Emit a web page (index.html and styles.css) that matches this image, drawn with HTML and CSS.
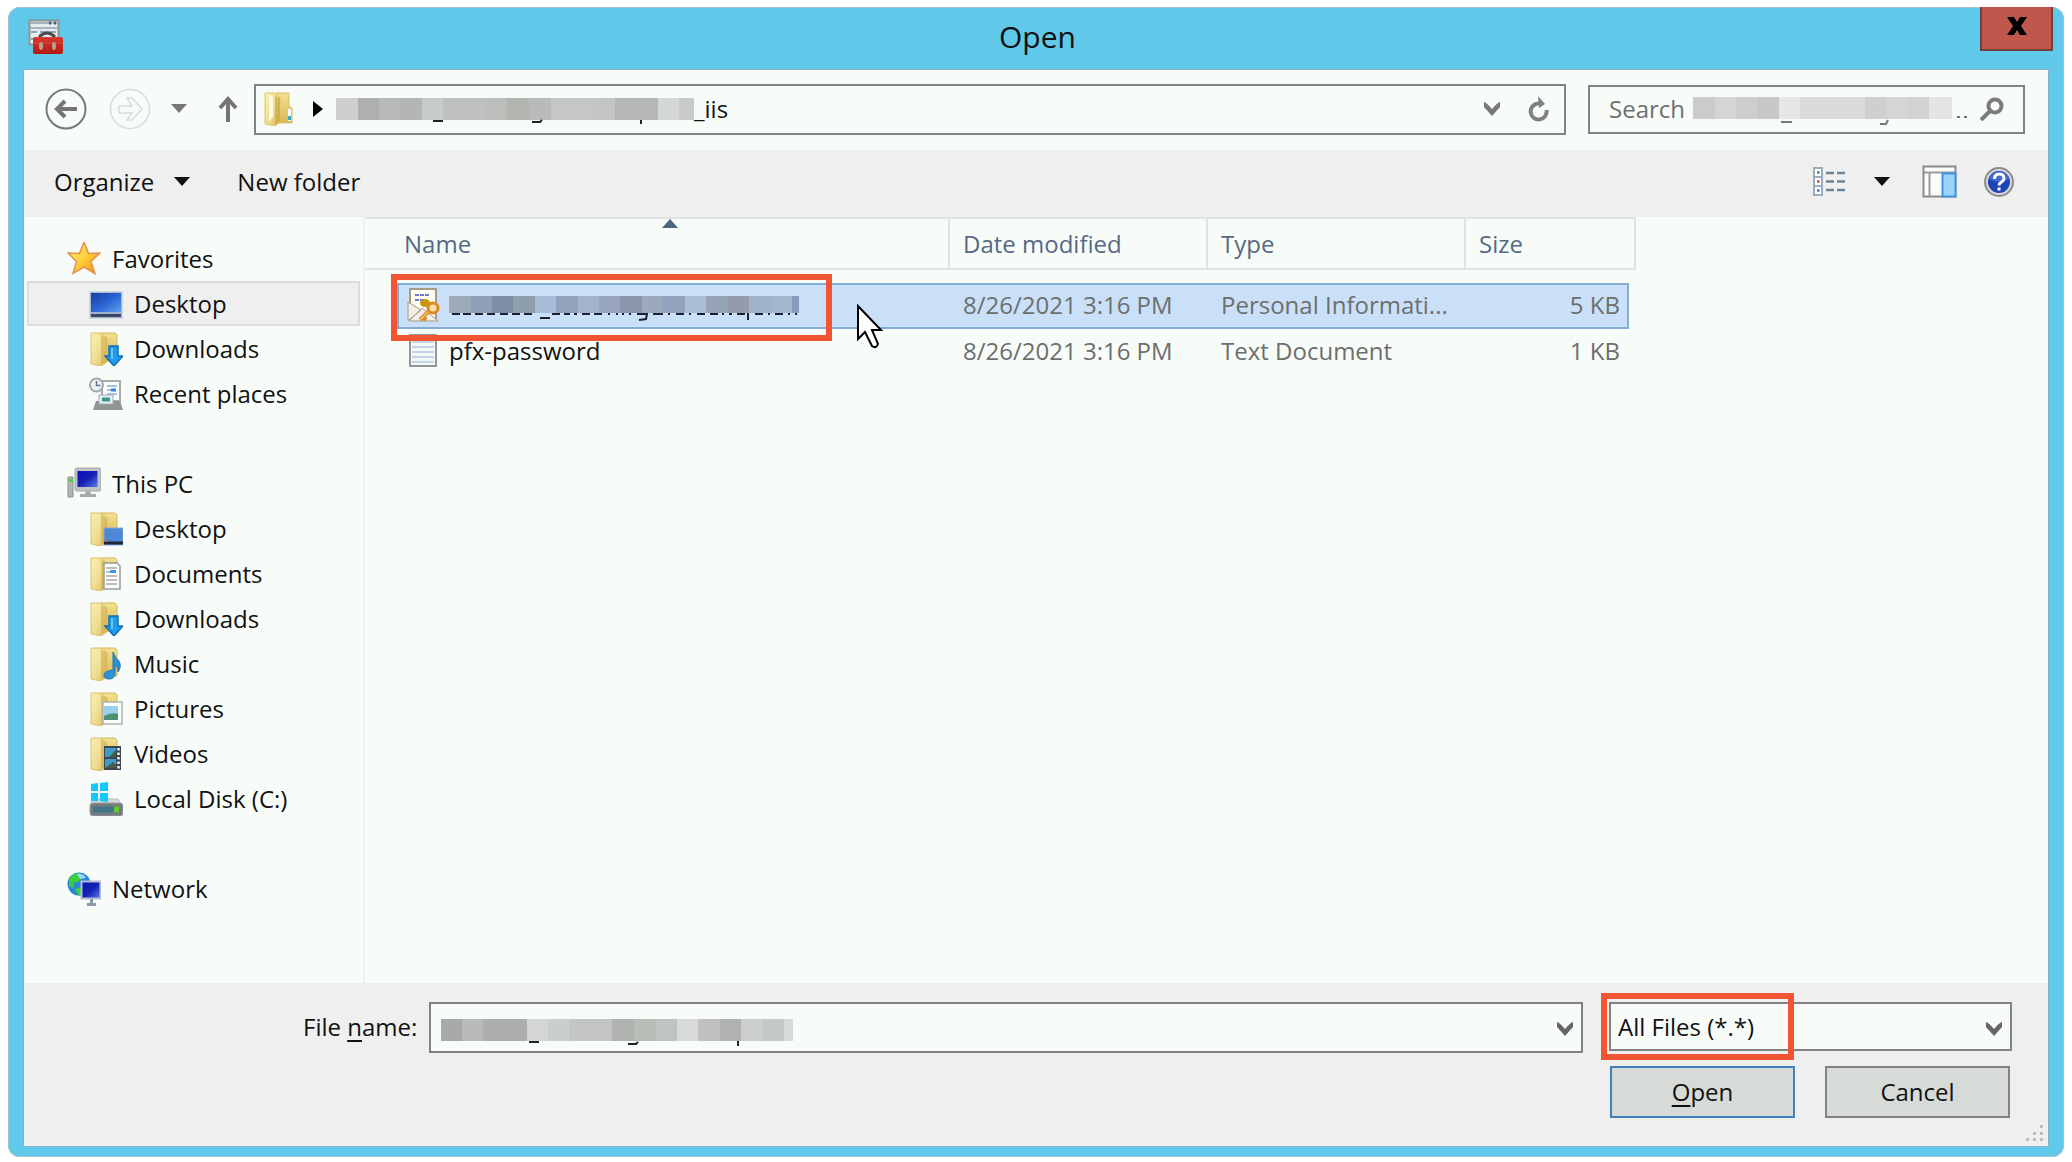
FILE: index.html
```html
<!DOCTYPE html>
<html lang="en">
<head>
<meta charset="utf-8">
<title>Open</title>
<link rel="stylesheet" href="styles.css">
</head>
<body>
<svg class="sprites" aria-hidden="true">
  <defs>
    <linearGradient id="g-flap" x1="0" y1="0" x2="1" y2="1"><stop offset="0" stop-color="#faf0b4"/><stop offset=".55" stop-color="#efdc90"/><stop offset="1" stop-color="#dcb95a"/></linearGradient>
    <linearGradient id="g-back" x1="0" y1="0" x2="0" y2="1"><stop offset="0" stop-color="#f2e091"/><stop offset="1" stop-color="#d9b755"/></linearGradient>
    <linearGradient id="g-screen" x1="0" y1="0" x2="1" y2="1"><stop offset="0" stop-color="#1a3f9c"/><stop offset=".5" stop-color="#2a63d2"/><stop offset="1" stop-color="#5f9ff0"/></linearGradient>
    <linearGradient id="g-navy" x1="0" y1="0" x2="1" y2="1"><stop offset="0" stop-color="#0a12b8"/><stop offset=".5" stop-color="#1420b4"/><stop offset="1" stop-color="#5a7be8"/></linearGradient>
    <linearGradient id="g-star" x1="0" y1="0" x2="1" y2="1"><stop offset="0" stop-color="#fff27a"/><stop offset=".5" stop-color="#fdd03a"/><stop offset="1" stop-color="#f08a1c"/></linearGradient>
    <linearGradient id="g-red" x1="0" y1="0" x2="0" y2="1"><stop offset="0" stop-color="#d83a32"/><stop offset="1" stop-color="#b3170f"/></linearGradient>
    <symbol id="folder" viewBox="0 0 34 34">
      <path d="M11 1h15l2 2v26H12z" fill="url(#g-back)" stroke="#d6b65c"/>
      <path d="M2 1h9l7 5v24l-6 4-10-2z" fill="url(#g-flap)" stroke="#dcc070"/>
      <path d="M12 3v30l6-4V6z" fill="#cda944" opacity=".55"/>
    </symbol>
    <symbol id="arrow-down" viewBox="0 0 34 34">
      <path d="M20 14h9v10h5l-9 10-9-10h4z" fill="#1e9bec" stroke="#1670b0" stroke-width="1.5"/>
      <path d="M23 16v11" stroke="#6cc5fa" stroke-width="2"/>
    </symbol>
    <symbol id="triangle" viewBox="0 0 16 10"><path d="M0 0h16L8 9z" fill="currentColor"/></symbol>
    <symbol id="chevron" viewBox="0 0 16 14"><path d="M0 0q3 1 8 7 5-6 8-7v5L8 14 0 5z" fill="currentColor"/></symbol>
  </defs>
</svg>

<main class="dialog">
  <header class="titlebar">
    <svg class="app-icon" viewBox="0 0 36 36" aria-hidden="true">
      <rect x="1.500" y="1.500" width="29" height="24" fill="#e6ebee" stroke="#8b9499" stroke-width="2"/>
      <path d="M2 4h28M2 9h28" stroke="#a9b4bd" stroke-width="2"/><path d="M21 4h2M26 4h2" stroke="#46607c" stroke-width="3"/>
      <path d="M3 13h6M3 20h4M12 13h16" stroke="#8fa3ba" stroke-width="2"/>
      <path d="M12 19v-2q7-6 14 0v2" fill="none" stroke="#4a4a4a" stroke-width="3"/>
      <rect x="5" y="18" width="30" height="17" rx="2" fill="url(#g-red)"/>
      <path d="M5 24h30" stroke="#d84b42"/><ellipse cx="13" cy="27" rx="2" ry="4" fill="#b9a092"/><ellipse cx="26" cy="27" rx="2" ry="4" fill="#b9a092"/>
    </svg>
    <h1 class="title">Open</h1>
    <button class="close" type="button" aria-label="Close"><svg width="20" height="18" viewBox="0 0 20 18"><path d="M0 0h7l3 5 3-5h7l-6 9 6 9h-7l-3-5-3 5H0l6-9z" fill="#000"/></svg></button>
  </header>

  <div class="client">
    <nav class="navbar" aria-label="Location">
      <button class="plain back" type="button" aria-label="Back"><svg width="42" height="42" viewBox="0 0 42 42" fill="none"><circle cx="21" cy="21" r="19.500" stroke="#77797a" stroke-width="2"/><path d="M12 21h20M20 13l-8 8 8 8" stroke="#757575" stroke-width="4"/></svg></button>
      <button class="plain forward" type="button" aria-label="Forward"><svg width="42" height="42" viewBox="0 0 42 42" fill="none" stroke="#d9dbd9" stroke-width="1.500"><circle cx="21" cy="21" r="19.500"/><path d="M10 18h13l-5-8h5l10 11-10 11h-5l5-7H10z"/></svg></button>
      <button class="plain recent" type="button" aria-label="Recent locations"><svg width="16" height="10"><use href="#triangle"/></svg></button>
      <button class="plain up" type="button" aria-label="Up"><svg width="20" height="26" viewBox="0 0 20 26"><path d="M10 26V4M2 12l8-9 8 9" fill="none" stroke="#757575" stroke-width="4"/></svg></button>
      <div class="address">
        <svg class="address-folder" viewBox="0 0 30 34" aria-hidden="true">
          <path d="M12 1h13v13l3 2v15H12z" fill="url(#g-back)" stroke="#dcc062"/><path d="M1 1h9l6 4v25l-5 4-10-2z" fill="url(#g-flap)" stroke="#dfc468"/><path d="M5 3l4 2v20l-4 4z" fill="#fffbe0"/><path d="M11 4v29l5-4V6z" fill="#c7a03c" opacity=".6"/><path d="M25.500 17v12" stroke="#fff" stroke-width="3"/><path d="M25.500 24v4" stroke="#3fa6c4" stroke-width="3"/>
        </svg>
        <svg class="crumb-arrow" width="10" height="16" viewBox="0 0 10 16" aria-hidden="true"><path d="M0 0l10 8-10 8z" fill="#000"/></svg>
        <svg class="mosaic" width="358" height="26" viewBox="0 0 358 26" aria-hidden="true">
          <path fill="#cfd0cd" d="M0 0h22v22H0z"/><path fill="#aeb0ad" d="M22 0h21v22H22z"/><path fill="#b8bab7" d="M43 0h21v22H43z"/><path fill="#b4b6b3" d="M64 0h22v22H64z"/><path fill="#c8ccc8" d="M86 0h21v22H86z"/><path fill="#bfc1be" d="M107 0h43v22h-43z"/><path fill="#bcbebb" d="M150 0h21v22h-21z"/><path fill="#b3b5b1" d="M171 0h22v22h-22z"/><path fill="#b9bbb8" d="M193 0h22v22h-22z"/><path fill="#c5c7c4" d="M215 0h43v22h-43z"/><path fill="#c3c5c2" d="M258 0h21v22h-21z"/><path fill="#b5b7b4" d="M279 0h43v22h-43z"/><path fill="#d4d8d4" d="M322 0h21v22h-21z"/><path fill="#cacbc9" d="M343 0h15v22h-15z"/>
          <path d="M97 23h10M196 24h8l2-2M305 22v4" fill="none" stroke="#222" stroke-width="2"/>
        </svg>
        <span class="crumb">_iis</span>
        <button class="plain address-drop" type="button" aria-label="Previous locations"><svg width="16" height="14"><use href="#chevron"/></svg></button>
        <button class="plain" type="button" aria-label="Refresh"><svg width="22" height="26" viewBox="0 0 22 26"><path d="M13 7.500h-2a8 8 0 1 0 8.500 6.500" fill="none" stroke="#808080" stroke-width="4"/><path d="M11 0l7 8-6 4z" fill="#808080"/></svg></button>
      </div>
      <div class="search">
        <input class="search-input" type="search" placeholder="Search" aria-label="Search">
        <svg class="mosaic" width="274" height="28" viewBox="0 0 274 28" aria-hidden="true">
          <path fill="#c9ccc9" d="M0 0h22v22H0z"/><path fill="#d3d6d3" d="M22 0h21v22H22z"/><path fill="#cecfcd" d="M43 0h21v22H43z"/><path fill="#c8c9c6" d="M64 0h22v22H64z"/><path fill="#e5e8e5" d="M86 0h21v22H86z"/><path fill="#d8dbd8" d="M107 0h65v22h-65z"/><path fill="#cdd0cc" d="M172 0h22v22h-22z"/><path fill="#d6d6d4" d="M194 0h21v22h-21z"/><path fill="#d2d2d0" d="M215 0h21v22h-21z"/><path fill="#e2e5e2" d="M236 0h23v22h-23z"/>
          <path d="M88 25h11M187 27h6l2-4M264 20h3M271 20h3" fill="none" stroke="#777" stroke-width="2"/>
        </svg>
        <button class="plain find" type="submit" aria-label="Find"><svg width="24" height="24" viewBox="0 0 24 24" fill="none" stroke="#7b7b7b"><circle cx="15" cy="9" r="6.500" stroke-width="4"/><path d="M10 14l-9 9" stroke-width="4"/></svg></button>
      </div>
    </nav>

    <div class="toolbar">
      <button class="plain organize" type="button">Organize <svg width="16" height="10" aria-hidden="true"><use href="#triangle"/></svg></button>
      <button class="plain" type="button">New folder</button>
      <button class="plain view" type="button" aria-label="Change view"><svg width="34" height="30" viewBox="0 0 34 30" fill="none"><path d="M1 1h8v27H1zM1 10h8M1 19h8" fill="#fff" stroke="#9aacbd" stroke-width="2"/><path d="M4 5.500h2.500" stroke="#3f8a50" stroke-width="2.500"/><path d="M4 14.500h2.500" stroke="#e0402a" stroke-width="2.500"/><path d="M4 23.500h2.500" stroke="#2a7bd0" stroke-width="2.500"/><path d="M13 6h8m3 0h8M13 14.500h8m3 0h8M13 23h8m3 0h8" stroke="#6f8396" stroke-width="2.500"/></svg></button>
      <button class="plain view-drop" type="button" aria-label="More views"><svg width="16" height="10"><use href="#triangle"/></svg></button>
      <button class="plain pane" type="button" aria-label="Preview pane"><svg width="35" height="33" viewBox="0 0 35 33"><path d="M1.500 1.500h32v30h-32z" fill="#fafdfb" stroke="#8a8a8a" stroke-width="2"/><path d="M2 7.500h31M7.500 8v23" stroke="#9a9a9a" stroke-width="2"/><path d="M20.500 8.500h13v23h-13z" fill="#9ed3fb" stroke="#3d93e6" stroke-width="2"/></svg></button>
      <button class="plain" type="button" aria-label="Help"><svg width="30" height="30" viewBox="0 0 30 30"><circle cx="15" cy="15" r="14" fill="#d8d8d4" stroke="#8d8d8d" stroke-width="2"/><circle cx="15" cy="15" r="11" fill="#1d44b8"/><path d="M5 12a10.500 10.500 0 0 1 20 0q-9 6-20 0" fill="#5479dc" opacity=".7"/><path d="M10.500 12q0-5 4.800-5t4.700 4.500q0 2-2.500 3.500T15 18.500" fill="none" stroke="#fff" stroke-width="3"/><path d="M13.500 20.500h3v3h-3z" fill="#fff"/></svg></button>
    </div>

    <div class="browser">
      <nav class="sidebar" aria-label="Places">
        <ul class="group">
          <li><a class="place" href="#favorites"><svg class="icon" viewBox="0 0 34 34"><path d="M17 0l4.500 11.500L33 11l-9 8.500 4 12L17 25 6 31.500l3.500-12L1 11l11.500.500z" fill="url(#g-star)" stroke="#e5904a" stroke-width="1.500"/></svg>Favorites</a></li>
          <li><a class="place child current" href="#desktop"><svg class="icon" viewBox="0 0 34 34"><rect x="1" y="5" width="32" height="26" fill="#9fb4cc" stroke="#b2c2d4"/><rect x="2" y="6" width="30" height="19" fill="url(#g-screen)"/><path d="M2 27h30v3H2z" fill="#3a4868"/></svg>Desktop</a></li>
          <li><a class="place child" href="#downloads"><svg class="icon" viewBox="0 0 34 34"><use href="#folder"/><use href="#arrow-down"/></svg>Downloads</a></li>
          <li><a class="place child" href="#recent"><svg class="icon" viewBox="0 0 34 34"><path d="M13 4h18v20H13z" fill="#fbfcfc" stroke="#a9adad" stroke-width="2"/><path d="M18 9h10M18 13h4M18 17h10" stroke="#a8c0dc" stroke-width="2"/><path d="M22 13h5" stroke="#2f86e8" stroke-width="3"/><path d="M7 24h24l3 9H4z" fill="#8f9494"/><rect x="10" y="18" width="14" height="9" fill="#e5eff5" stroke="#a0abb2"/><path d="M13 22.500h8" stroke="#3a9a8a" stroke-width="4"/><circle cx="7.500" cy="8" r="6.500" fill="#edf1f3" stroke="#a2a8aa" stroke-width="2"/><path d="M7.500 4v4.500h4" fill="none" stroke="#607890" stroke-width="1.500"/></svg>Recent places</a></li>
        </ul>
        <ul class="group">
          <li><a class="place" href="#pc"><svg class="icon" viewBox="0 0 34 34"><path d="M1 10h5v20H1z" fill="#b4b6b6" stroke="#8c9090"/><path d="M2 13.500h4" stroke="#45d62c" stroke-width="3"/><rect x="8" y="1" width="26" height="23" rx="2" fill="#c0c2c4" stroke="#a6a8aa"/><rect x="10.500" y="4" width="20" height="16" fill="url(#g-navy)"/><path d="M19 24h4l1 3h5v3H13v-3h5z" fill="#a6a9ab"/></svg>This PC</a></li>
          <li><a class="place child" href="#pc-desktop"><svg class="icon" viewBox="0 0 34 34"><use href="#folder"/><rect x="15" y="16" width="19" height="17" fill="#4b88d8" stroke="#8ca8cc"/><path d="M15 31h19" stroke="#1d2638" stroke-width="3"/><path d="M16 29h3" stroke="#e8502a" stroke-width="2"/></svg>Desktop</a></li>
          <li><a class="place child" href="#documents"><svg class="icon" viewBox="0 0 34 34"><use href="#folder"/><path d="M15 6h13l3 3v23H15z" fill="#fcfdfd" stroke="#9b9b98" stroke-width="1.500"/><path d="M17 11h11M17 15h4M17 19h11M17 23h11M17 27h11" stroke="#a6a6a2" stroke-width="1.500"/><path d="M21 14.500h6" stroke="#3c98ee" stroke-width="3"/></svg>Documents</a></li>
          <li><a class="place child" href="#pc-downloads"><svg class="icon" viewBox="0 0 34 34"><use href="#folder"/><use href="#arrow-down"/></svg>Downloads</a></li>
          <li><a class="place child" href="#music"><svg class="icon" viewBox="0 0 34 34"><use href="#folder"/><path d="M24 5q2 6 6 9 3 6-1 11 0-6-3-7v8q0 6-6 6-5 0-5-4t9-5z" fill="#2e92d6" stroke="#1f78b8"/></svg>Music</a></li>
          <li><a class="place child" href="#pictures"><svg class="icon" viewBox="0 0 34 34"><use href="#folder"/><rect x="14" y="10" width="19" height="22" fill="#fbfcfc" stroke="#b0b2b2" stroke-width="1.500"/><path d="M15 14h14v14H15z" fill="#9cd0ea"/><path d="M15 24q8-4 14-2v6H15z" fill="#4c8f74"/></svg>Pictures</a></li>
          <li><a class="place child" href="#videos"><svg class="icon" viewBox="0 0 34 34"><use href="#folder"/><path d="M15 9h17v24H15z" fill="#3c4650"/><path d="M16 11h11v9H16zM16 22h11v9H16z" fill="#3d9cc8"/><path d="M20 20l7-7v7zM16 31l8-6 3 3v3z" fill="#4d5a48"/><path d="M29.500 11v21" stroke="#eef2f2" stroke-width="2.500" stroke-dasharray="2.500 2"/></svg>Videos</a></li>
          <li><a class="place child" href="#disk-c"><svg class="icon" viewBox="0 0 34 34"><path d="M4 17h25l4 6H1z" fill="#d6d9da" stroke="#b6babb"/><rect x="1" y="21" width="33" height="13" rx="3" fill="#747c80" stroke="#9ca2a5"/><path d="M4 24.500h26v6H4z" fill="#437488"/><path d="M25 24.500h5v6h-5z" fill="#62c82e"/><path d="M2 2l7-1v8H2zM11 1l8-1v9h-8zM2 11h7v8H2zM11 11h8v9l-8-1z" fill="#12c8f8"/></svg>Local Disk (C:)</a></li>
        </ul>
        <ul class="group">
          <li><a class="place" href="#network"><svg class="icon" viewBox="0 0 34 34"><circle cx="12" cy="12" r="11.500" fill="#2a86d8"/><path d="M2 7q4-6 10-6l4 4-5 5-4 1-1 5-4-2zM8 17l6-2 3 5-5 4z" fill="#3ad03c"/><path d="M10 2q6-1 9 4l-6 1z" fill="#9bd6f4"/><rect x="14.500" y="9.500" width="19" height="17" fill="url(#g-navy)" stroke="#b4bcd6" stroke-width="2"/><path d="M23 27h3v4h3v3h-9v-3h3z" fill="#8f98a8"/></svg>Network</a></li>
        </ul>
      </nav>

      <section class="listing" aria-label="Files">
        <table class="files">
          <colgroup><col class="c-lead"><col class="c-name"><col class="c-date"><col class="c-type"><col class="c-size"><col class="c-tail"></colgroup>
          <thead>
            <tr><th class="h-name" colspan="2" aria-sort="ascending">Name<svg class="sort" width="16" height="9" viewBox="0 0 16 9" aria-hidden="true"><path d="M0 9l8-9 8 9z" fill="#4d6580"/></svg></th><th>Date modified</th><th>Type</th><th colspan="2">Size</th></tr>
          </thead>
          <tbody>
            <tr class="selected">
              <td class="blank"></td>
              <td class="name">
                <div class="file">
                  <svg class="icon" viewBox="0 0 34 34" aria-hidden="true"><path d="M3 1h26v31H3z" fill="#fdfcf5" stroke="#a99b80" stroke-width="2"/><path d="M8 7h14M8 12h10" stroke="#6c7ccc" stroke-width="2" stroke-dasharray="4 1"/><path d="M1 14l13 8-12 10H1zM2 33l13-13 16 13z" fill="#f1efe8" stroke="#a49a88"/><ellipse cx="18" cy="15" rx="5" ry="4" fill="#c9950a"/><circle cx="26" cy="20" r="5" fill="#fde0a8" stroke="#d98a26" stroke-width="3"/><path d="M22 23l-9 9M16 29l3 3" stroke="#d98a26" stroke-width="4"/><path d="M21 24l-8 8" stroke="#fbc56c" stroke-width="1.500"/></svg>
                  <svg class="mosaic" width="350" height="26" viewBox="0 0 350 26" role="img" aria-label="Certificate file">
                    <path d="M3 18h8M14 18h8M26 18h8M38 18h8M51 18h8M63 18h8M75 18h8M103 18h8M115 18h6M125 18h3M133 18h8M145 18h8M159 18h2M167 18h2M173 18h2M180 18h2M188 18h10l-1 5-7 1M204 18h10M219 18h2M227 18h8M240 18h2M248 18h8M261 18h8M273 18h2M280 18h3M288 18h8M299 17v7M306 18h8M319 18h2M326 18h8M339 18h2M346 18h2M91 22h10" fill="none" stroke="#1b2130" stroke-width="2"/>
                    <path fill="#9daab8" d="M0 0h22v17H0z"/><path fill="#909fb8" d="M22 0h21v17H22z"/><path fill="#7d8ea8" d="M43 0h21v17H43z"/><path fill="#8f9ead" d="M64 0h22v17H64z"/><path fill="#a9bcd8" d="M86 0h21v17H86z"/><path fill="#93a2bb" d="M107 0h22v17h-22z"/><path fill="#a2b3cb" d="M129 0h21v17h-21z"/><path fill="#97a5c0" d="M150 0h21v17h-21z"/><path fill="#8b96ac" d="M171 0h22v17h-22z"/><path fill="#9ca8bc" d="M193 0h21v17h-21z"/><path fill="#93a3bd" d="M214 0h22v17h-22z"/><path fill="#a9bfd8" d="M236 0h21v17h-21z"/><path fill="#95a3b5" d="M257 0h22v17h-22z"/><path fill="#939bac" d="M279 0h21v17h-21z"/><path fill="#9fb2cc" d="M300 0h22v17h-22z"/><path fill="#a3b6d0" d="M322 0h21v17h-21z"/><path fill="#8a9cbc" d="M343 0h7v17h-7z"/>
                  </svg>
                  <span class="callout callout-file"></span>
                  <svg class="cursor" width="28" height="48" viewBox="0 0 28 48" aria-hidden="true"><path d="M2 3v33l7-7 7 14q4 3 6-2l-6-14h9z" fill="#fff" stroke="#000" stroke-width="2"/></svg>
                </div>
              </td>
              <td>8/26/2021 3:16 PM</td><td>Personal Informati...</td><td class="size">5 KB</td><td class="blank"></td>
            </tr>
            <tr>
              <td class="blank"></td>
              <td class="name"><div class="file"><svg class="icon" viewBox="0 0 34 34" aria-hidden="true"><path d="M3 1h26v31H3z" fill="#f4f7f8" stroke="#929696" stroke-width="2"/><path d="M5 8h22M5 13h22M5 18h22M5 23h22M5 28h22" stroke="#b4cbe0" stroke-width="1.500"/></svg>pfx-password</div></td>
              <td>8/26/2021 3:16 PM</td><td>Text Document</td><td class="size">1 KB</td><td class="blank"></td>
            </tr>
          </tbody>
        </table>
      </section>
    </div>

    <form class="footer">
      <div class="fields">
        <label for="filename">File <u>n</u>ame:</label>
        <div class="combo combo-name">
          <input id="filename" class="field" type="text">
          <svg class="mosaic" width="352" height="27" viewBox="0 0 352 27" aria-hidden="true">
            <path fill="#a8aaa7" d="M0 0h21v22H0z"/><path fill="#b9bbb8" d="M21 0h21v22H21z"/><path fill="#adafac" d="M42 0h44v22H42z"/><path fill="#d3d6d2" d="M86 0h21v22H86z"/><path fill="#cbcfcb" d="M107 0h21v22h-21z"/><path fill="#c4c6c3" d="M128 0h43v22h-43z"/><path fill="#b1b3b0" d="M171 0h22v22h-22z"/><path fill="#b9beb9" d="M193 0h22v22h-22z"/><path fill="#c0c4c0" d="M215 0h21v22h-21z"/><path fill="#d8dad7" d="M236 0h21v22h-21z"/><path fill="#c0c1be" d="M257 0h22v22h-22z"/><path fill="#b0b2af" d="M279 0h21v22h-21z"/><path fill="#cdcfcc" d="M300 0h22v22h-22z"/><path fill="#c4c8c4" d="M322 0h21v22h-21z"/><path fill="#d8dad7" d="M343 0h9v22h-9z"/>
            <path d="M88 23h10M187 25h8l2-2M297 22v5" fill="none" stroke="#222" stroke-width="2"/>
          </svg>
          <svg class="drop" width="16" height="14" aria-hidden="true"><use href="#chevron"/></svg>
        </div>
        <div class="combo combo-type">
          <select class="field" aria-label="File type"><option>All Files (*.*)</option></select>
          <svg class="drop" width="16" height="14" aria-hidden="true"><use href="#chevron"/></svg>
          <span class="callout callout-type"></span>
        </div>
      </div>
      <div class="actions">
        <button class="action primary" type="submit"><u>O</u>pen</button>
        <button class="action" type="button">Cancel</button>
      </div>
      <svg class="grip" width="18" height="18" viewBox="0 0 18 18" aria-hidden="true"><path d="M14 1h3v3h-3zM7 8h3v3H7zM14 8h3v3h-3zM0 14h3v3H0zM7 14h3v3H7zM14 14h3v3h-3z" fill="#bdbdbd"/></svg>
    </form>
  </div>
</main>
</body>
</html>
```
FILE: styles.css
```css
* { box-sizing: border-box; }

body {
  margin: 0;
  padding: 7px 8px 5px;
  min-height: 100vh;
  display: flex;
  background: #fff;
  color: #111;
  font: 24px/32px "Open Sans", "Noto Sans", sans-serif;
}

button, input, select { font: inherit; color: inherit; }
svg { display: block; flex: none; }
.sprites { position: absolute; width: 0; height: 0; }

.dialog {
  flex: 1;
  display: flex;
  flex-direction: column;
  min-width: 0;
  padding: 0 16px 11px;
  background: #60c8e9;
  border-radius: 12px;
  box-shadow: inset 0 0 0 1px #9cc3d2;
}

.titlebar {
  display: flex;
  align-items: flex-start;
  justify-content: space-between;
  height: 63px;
}
.app-icon { width: 36px; height: 36px; margin: 12px 31px 0 4px; }
.title { margin: 10px 0 0; font-size: 30px; line-height: 40px; font-weight: 400; }
.close {
  display: grid;
  place-items: center;
  width: 73px;
  height: 44px;
  margin-right: -5px;
  padding: 0 0 4px;
  background: #bf574d;
  border: 2px solid #74423d;
  border-top: 0;
}

.client {
  flex: 1;
  display: flex;
  flex-direction: column;
  background: #f7fcf8;
  box-shadow: 0 0 0 1px #7fb2c8;
}

.plain {
  display: flex;
  align-items: center;
  padding: 0;
  border: 0;
  background: none;
}

.navbar {
  display: flex;
  align-items: center;
  height: 80px;
  padding: 0 23px 2px 21px;
  color: #777;
}
.forward { margin-left: 22px; }
.recent { margin-left: 20px; }
.up { margin: 0 16px 0 31px; }
.address {
  flex: 1;
  display: flex;
  align-items: center;
  height: 51px;
  padding: 0 15px 0 8px;
  border: 2px solid #828282;
}
.address-folder { width: 30px; height: 34px; margin-right: 19px; }
.crumb-arrow { margin-right: 13px; }
.address .mosaic { margin-top: 4px; }
.crumb { color: #111; }
.address-drop { margin: 0 27px 0 auto; }
.search {
  position: relative;
  width: 437px;
  height: 49px;
  margin-left: 22px;
  border: 2px solid #828282;
}
.search-input {
  display: block;
  width: 100%;
  height: 100%;
  padding: 0 50px 2px 19px;
  border: 0;
  background: none;
}
.search-input::placeholder { color: #6f6f6f; opacity: 1; }
.search .mosaic { position: absolute; left: 103px; top: 10px; }
.find { position: absolute; right: 19px; top: 10px; }

.toolbar {
  display: flex;
  align-items: center;
  height: 67px;
  padding: 0 34px 4px 30px;
  background: #efefef;
}
.organize { gap: 20px; margin-right: 47px; }
.view { margin-left: auto; }
.view-drop { margin: 0 32px 0 27px; }
.pane { margin-right: 27px; }

.browser { flex: 1; display: flex; min-height: 766px; }

.sidebar {
  width: 341px;
  padding: 19px 3px 0;
  border-right: 2px solid #f0f3f1;
}
.group { margin: 0 0 45px; padding: 0; list-style: none; }
.place {
  display: flex;
  align-items: center;
  gap: 11px;
  height: 45px;
  padding-left: 38px;
  border: 2px solid transparent;
  color: inherit;
  text-decoration: none;
}
.child { padding-left: 60px; }
.current { background: #efefef; border-color: #dcdcdc; }
.icon { width: 34px; height: 34px; }

.listing { flex: 1; }
.files {
  width: 1271px;
  table-layout: fixed;
  border-collapse: separate;
  border-spacing: 0;
  color: #6e6e6e;
}
.c-lead { width: 32px; }
.c-name { width: 553px; }
.c-date, .c-type { width: 258px; }
.c-size { width: 163px; }
.c-tail { width: 7px; }
.files th {
  height: 53px;
  padding: 0 0 0 13px;
  border: solid #e2e4e2;
  border-width: 2px 2px 2px 0;
  color: #566a85;
  font-weight: 400;
  text-align: left;
}
.files .h-name { position: relative; padding-left: 39px; }
.sort { position: absolute; left: 297px; top: 0; }
.files tbody::before { content: ""; display: block; height: 13px; }
.files td { height: 46px; padding: 0 0 2px 13px; white-space: nowrap; }
.files .blank { padding: 0; }
.files .name { padding-left: 10px; color: #111; }
.files .size { padding-right: 9px; text-align: right; }
.selected td:not(.blank) {
  background: #c9e0f8;
  border: solid #83add3;
  border-width: 2px 0;
}
.files .selected .name { padding-left: 8px; border-left-width: 2px; }
.files .selected .size { padding-right: 7px; border-right-width: 2px; }
.file { position: relative; display: flex; align-items: center; gap: 8px; }
.file .mosaic { margin-top: 8px; }

.callout { position: absolute; z-index: 1; border: 6px solid #f25533; pointer-events: none; }
.callout-file { left: -16px; top: -14px; width: 441px; height: 67px; }
.cursor { position: absolute; left: 449px; top: 15px; z-index: 2; }

.footer {
  position: relative;
  padding: 19px 36px 28px 279px;
  background: #efefef;
}
.fields { display: flex; align-items: flex-start; }
.fields label { width: 126px; padding-top: 9px; }
u { text-decoration-thickness: 2px; text-underline-offset: 4px; text-decoration-skip-ink: none; }
.combo { position: relative; color: #666; }
.combo-name { flex: 1; height: 51px; margin-right: 26px; }
.combo-type { width: 403px; height: 49px; }
.field {
  appearance: none;
  display: block;
  width: 100%;
  height: 100%;
  padding: 0 40px 0 7px;
  border: 2px solid #828282;
  border-radius: 0;
  background: #f7fcf8;
  color: #111;
}
.combo .mosaic { position: absolute; left: 12px; top: 17px; }
.drop { position: absolute; right: 10px; top: 20px; }
.callout-type { left: -8px; top: -9px; width: 193px; height: 67px; }
.actions { display: flex; justify-content: flex-end; gap: 30px; margin-top: 13px; padding-right: 2px; }
.action {
  width: 185px;
  height: 52px;
  padding: 0;
  border: 2px solid #828282;
  background: #d7dbd7;
}
.primary { border-color: #3f83b8; }
.grip { position: absolute; right: 4px; bottom: 4px; }
```
